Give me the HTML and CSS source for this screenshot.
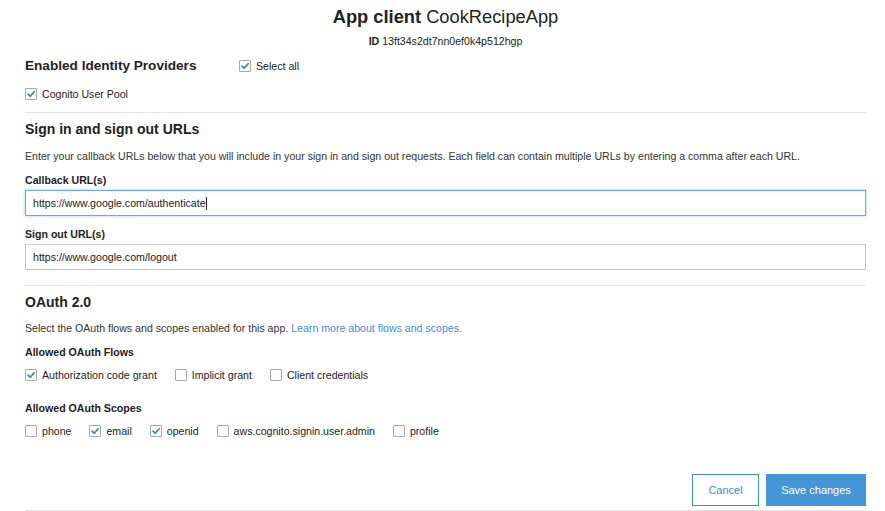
FILE: index.html
```html
<!DOCTYPE html>
<html>
<head>
<meta charset="utf-8">
<link rel="stylesheet" href="styles.css">
</head>
<body>
<div class="page">
  <header class="head">
    <h1 class="title"><b>App client</b> CookRecipeApp</h1>
    <div class="client-id"><b>ID</b> 13ft34s2dt7nn0ef0k4p512hgp</div>
  </header>

  <section class="providers">
    <div class="prov-row">
      <h2 class="h-prov">Enabled Identity Providers</h2>
      <label class="cb"><span class="box on"><svg viewBox="0 0 12 12"><polyline points="2.5,6.2 5,8.7 9.8,3.3"/></svg></span>Select all</label>
    </div>
    <label class="cb cognito"><span class="box on"><svg viewBox="0 0 12 12"><polyline points="2.5,6.2 5,8.7 9.8,3.3"/></svg></span>Cognito User Pool</label>
  </section>

  <section class="sect urls">
    <h2 class="h-sect">Sign in and sign out URLs</h2>
    <p class="desc">Enter your callback URLs below that you will include in your sign in and sign out requests. Each field can contain multiple URLs by entering a comma after each URL.</p>
    <div class="field-label">Callback URL(s)</div>
    <div class="input focus">https://www.google.com/authenticate<span class="caret"></span></div>
    <div class="field-label second">Sign out URL(s)</div>
    <div class="input">https://www.google.com/logout</div>
  </section>

  <section class="sect oauth">
    <h2 class="h-sect">OAuth 2.0</h2>
    <p class="desc">Select the OAuth flows and scopes enabled for this app. <a class="link">Learn more about flows and scopes.</a></p>
    <div class="field-label">Allowed OAuth Flows</div>
    <div class="cb-row flows">
      <label class="cb"><span class="box on"><svg viewBox="0 0 12 12"><polyline points="2.5,6.2 5,8.7 9.8,3.3"/></svg></span>Authorization code grant</label>
      <label class="cb"><span class="box"></span>Implicit grant</label>
      <label class="cb"><span class="box"></span>Client credentials</label>
    </div>
    <div class="field-label scopes-label">Allowed OAuth Scopes</div>
    <div class="cb-row scopes">
      <label class="cb"><span class="box"></span>phone</label>
      <label class="cb"><span class="box on"><svg viewBox="0 0 12 12"><polyline points="2.5,6.2 5,8.7 9.8,3.3"/></svg></span>email</label>
      <label class="cb"><span class="box on"><svg viewBox="0 0 12 12"><polyline points="2.5,6.2 5,8.7 9.8,3.3"/></svg></span>openid</label>
      <label class="cb"><span class="box"></span>aws.cognito.signin.user.admin</label>
      <label class="cb"><span class="box"></span>profile</label>
    </div>
  </section>

  <footer class="actions">
    <button class="btn cancel">Cancel</button>
    <button class="btn save">Save changes</button>
  </footer>
</div>
</body>
</html>
```
FILE: styles.css
```css
* { box-sizing: border-box; }
html, body { margin: 0; padding: 0; background: #fff; }
body {
  font-family: "Liberation Sans", Arial, sans-serif;
  color: #222;
  font-size: 10.6px;
}
.page {
  padding: 0 19px 0 25px;
  width: 885px;
}
.head { text-align: center; padding-top: 6px; }
.title {
  margin: 0;
  font-size: 18.3px;
  line-height: 22px;
  font-weight: normal;
  color: #222;
}
.title b { font-weight: bold; }
.client-id {
  margin-top: 6px;
  font-size: 10.6px;
  line-height: 14px;
}
.providers { padding-top: 8px; padding-bottom: 10px; border-bottom: 1px solid #e4e4e4; }
.prov-row { display: flex; align-items: center; height: 20px; }
.h-prov {
  margin: 0;
  width: 214px;
  font-size: 13.6px;
  line-height: 20px;
  font-weight: bold;
  color: #222;
}
.cb {
  display: inline-flex;
  align-items: center;
  font-size: 10.6px;
  line-height: 14px;
  color: #222;
}
.box {
  width: 12px;
  height: 12px;
  border: 1px solid #a9a9a9;
  border-radius: 1px;
  margin-right: 5px;
  background: #fff;
  display: inline-block;
  flex: none;
}
.box svg { display: block; width: 10px; height: 10px; }
.box polyline { fill: none; stroke: #2f7fd6; stroke-width: 2; stroke-linecap: round; stroke-linejoin: round; }
.cognito { margin-top: 11px; }
.sect { border-bottom: 1px solid #e4e4e4; }
.h-sect {
  margin: 0;
  font-size: 14px;
  line-height: 18px;
  font-weight: bold;
  color: #222;
}
.urls { padding-top: 7px; padding-bottom: 15px; }
.oauth { padding-top: 7px; padding-bottom: 0; border-bottom: none; }
.desc {
  margin: 11px 0 0;
  font-size: 10.6px;
  line-height: 14px;
  color: #333;
}
.oauth .desc { margin-top: 10px; }
.link { color: #3b8fd6; }
.field-label {
  margin-top: 10px;
  font-size: 10.6px;
  line-height: 14px;
  font-weight: bold;
  color: #222;
}
.field-label.second { margin-top: 11px; }
.input {
  margin-top: 3px;
  height: 26px;
  border: 1px solid #c4c4c4;
  border-top-color: #d0d0d0;
  padding: 0 7px;
  display: flex;
  align-items: center;
  font-size: 10.6px;
  color: #222;
}
.input.focus {
  border-color: #6aa6f0;
  box-shadow: 0 0 3px rgba(90,150,235,0.5);
}
.caret { display: inline-block; width: 1px; height: 13px; background: #222; margin-left: 0; }
.cb-row { display: flex; align-items: center; margin-top: 9px; height: 14px; }
.cb-row .cb { margin-right: 18px; }
.scopes .cb { margin-right: 18px; }
.scopes-label { margin-top: 19px; }
.actions {
  display: flex;
  justify-content: flex-end;
  gap: 7px;
  margin-top: 36px;
  padding-bottom: 4px;
  border-bottom: 1px solid #e4e4e4;
}
.btn {
  height: 32px;
  font-family: "Liberation Sans", Arial, sans-serif;
  font-size: 11px;
  padding: 0;
  border-radius: 0;
  cursor: pointer;
}
.cancel {
  width: 67px;
  background: #fff;
  border: 1px solid #3e8ed4;
  color: #3e8ed4;
}
.save {
  width: 100px;
  background: #4596d6;
  border: 1px solid #4596d6;
  color: #fff;
}
```
